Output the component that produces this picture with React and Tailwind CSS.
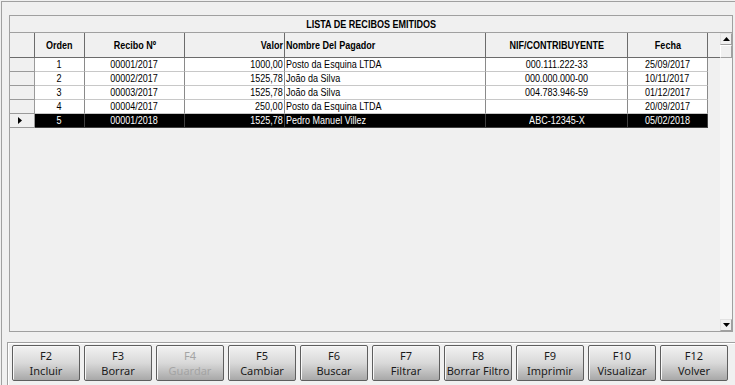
import React from 'react';

const rows = [
  ['1', '00001/2017', '1000,00', 'Posto da Esquina LTDA', '000.111.222-33', '25/09/2017'],
  ['2', '00002/2017', '1525,78', 'João da Silva', '000.000.000-00', '10/11/2017'],
  ['3', '00003/2017', '1525,78', 'João da Silva', '004.783.946-59', '01/12/2017'],
  ['4', '00004/2017', '250,00', 'Posto da Esquina LTDA', '', '20/09/2017'],
  ['5', '00001/2018', '1525,78', 'Pedro Manuel Villez', 'ABC-12345-X', '05/02/2018'],
];

// text is squeezed with scale-x to mimic the narrow face of the original
const cols = [
  { title: 'Orden', w: 'w-[50px]', box: 'justify-center', txt: 'origin-center' },
  { title: 'Recibo Nº', w: 'w-[100px]', box: 'justify-center', txt: 'origin-center' },
  { title: 'Valor', w: 'w-[100px]', box: 'justify-end pr-[1px]', txt: 'origin-right' },
  { title: 'Nombre Del Pagador', w: 'w-[201px]', box: 'justify-start pl-[1px]', txt: 'origin-left' },
  { title: 'NIF/CONTRIBUYENTE', w: 'w-[142px]', box: 'justify-center', txt: 'origin-center' },
  { title: 'Fecha', w: 'w-[80px]', box: 'justify-center', txt: 'origin-center' },
];

const buttons = [
  ['F2', 'Incluir'],
  ['F3', 'Borrar'],
  ['F4', 'Guardar', true],
  ['F5', 'Cambiar'],
  ['F6', 'Buscar'],
  ['F7', 'Filtrar'],
  ['F8', 'Borrar Filtro'],
  ['F9', 'Imprimir'],
  ['F10', 'Visualizar'],
  ['F12', 'Volver'],
];

const gridFont = { fontFamily: '"Liberation Sans Narrow", "Arial Narrow", "Liberation Sans", sans-serif' };

const ScrollBar = () => (
  <div className="w-[12px] flex flex-col bg-[#f6f6f6]">
    <div className="h-[12px] flex items-center justify-center bg-[#f0f0f0] border border-[#e2e2e2] border-b-[#a0a0a0] border-r-[#a0a0a0]">
      <svg width="7" height="4" viewBox="0 0 7 4"><path d="M3.5 0 L7 4 L0 4 Z" fill="#000" /></svg>
    </div>
    <div className="h-[13px] bg-[#f0f0f0] border border-[#ffffff] border-b-[#a0a0a0] border-r-[#a0a0a0]" />
    <div className="flex-1" />
    <div className="h-[12px] flex items-center justify-center bg-[#f0f0f0] border border-[#e2e2e2] border-b-[#a0a0a0] border-r-[#a0a0a0]">
      <svg width="7" height="4" viewBox="0 0 7 4"><path d="M0 0 L7 0 L3.5 4 Z" fill="#000" /></svg>
    </div>
  </div>
);

export default function App() {
  return (
    <div className="w-[735px] h-[385px] bg-[#f0f0f0] pt-[1px] pl-[1px] overflow-hidden">
      <div className="h-full border-t border-l border-[#a0a0a0] pl-[7px] pt-[13px]">
        {/* grid */}
        <div className="w-[724px] h-[317px] border border-[#a0a0a0] flex flex-col text-[11px] text-[#000]" style={gridFont}>
          <div className="h-[17px] border-b border-[#a0a0a0] flex items-center justify-center font-bold">
            <span className="inline-block scale-x-[0.82] whitespace-nowrap">LISTA DE RECIBOS EMITIDOS</span>
          </div>
          <div className="flex flex-1 min-h-0">
            <div className="flex-1 flex flex-col">
              <div className="h-[25px] flex border-b border-[#6b6b6b]">
                <div className="w-[25px] border-r border-[#6b6b6b]" />
                {cols.map((c) => (
                  <div key={c.title} className={`${c.w} ${c.box} flex items-center font-bold border-r border-[#6b6b6b]`}>
                    <span className={`inline-block scale-x-[0.82] whitespace-nowrap ${c.txt}`}>{c.title}</span>
                  </div>
                ))}
              </div>
              {rows.map((r, i) => {
                const sel = i === rows.length - 1;
                return (
                  <div key={i} className="h-[14px] flex">
                    <div className="w-[25px] flex items-center pl-[8px] border-r border-b border-[#9a9a9a]">
                      {sel && (
                        <svg width="4" height="7" viewBox="0 0 4 7"><path d="M0 0 L4 3.5 L0 7 Z" fill="#000" /></svg>
                      )}
                    </div>
                    {cols.map((c, j) => (
                      <div
                        key={c.title}
                        className={`${c.w} ${c.box} flex items-center leading-none border-r border-b ${
                          sel ? 'bg-black text-white border-[#404040]' : 'bg-white border-[#c8c8c8] border-r-[#8a8a8a]'
                        }`}
                      >
                        <span className={`inline-block scale-x-[0.82] whitespace-nowrap ${c.txt}`}>{r[j]}</span>
                      </div>
                    ))}
                  </div>
                );
              })}
            </div>
            <ScrollBar />
          </div>
        </div>

        {/* toolbar */}
        <div className="mt-[10px] ml-[-2px] h-[50px] border-t border-l border-[#a0a0a0] shadow-[inset_1px_1px_0_#ffffff] pt-[2px] pl-[4px] flex gap-[4px]">
          {buttons.map(([k, label, disabled]) => (
            <div
              key={k}
              className={`w-[68px] h-[36px] rounded-[2px] border border-[#5e5e5e] shadow-[inset_1px_1px_0_#f8f8f8] bg-gradient-to-b from-[#f2f2f2] via-[#d9d9d9] to-[#a8a8a8] flex flex-col items-center justify-center text-[11px] leading-[15px] whitespace-nowrap ${
                disabled ? 'text-[#a4a4a4]' : 'text-[#1b1b1b]'
              }`}
              style={{ fontFamily: '"Noto Sans", "Open Sans", sans-serif' }}
            >
              <span className="block h-[15px]">{k}</span>
              <span className="block h-[15px]">{label}</span>
            </div>
          ))}
        </div>
      </div>
    </div>
  );
}
